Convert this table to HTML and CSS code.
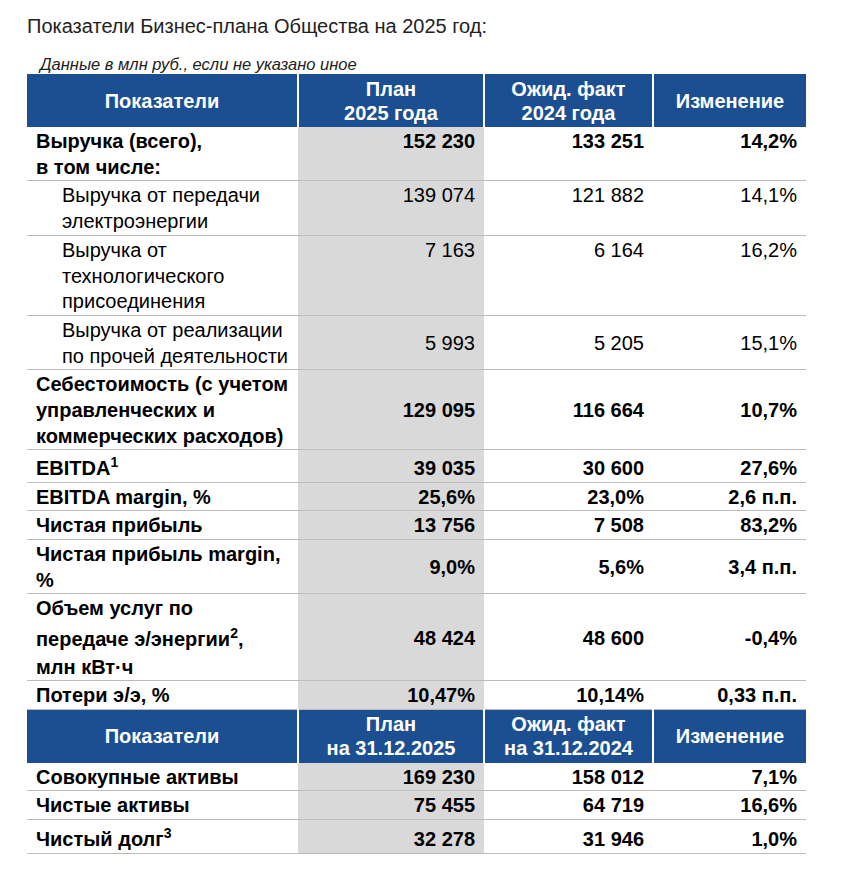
FILE: index.html
```html
<!DOCTYPE html>
<html lang="ru">
<head>
<meta charset="utf-8">
<link rel="stylesheet" href="styles.css">
</head>
<body>
<div class="page">
  <h1 class="title">Показатели Бизнес-плана Общества на 2025 год:</h1>
  <p class="note">Данные в млн руб., если не указано иное</p>
  <table class="kpi">
    <colgroup>
      <col class="c1"><col class="c2"><col class="c3"><col class="c4">
    </colgroup>
    <thead>
      <tr class="head">
        <th>Показатели</th>
        <th>План<br>2025 года</th>
        <th>Ожид. факт<br>2024 года</th>
        <th>Изменение</th>
      </tr>
    </thead>
    <tbody>
      <tr class="b top">
        <td>Выручка (всего),<br>в том числе:</td>
        <td class="plan">152 230</td><td>133 251</td><td>14,2%</td>
      </tr>
      <tr class="top">
        <td class="ind">Выручка от передачи<br>электроэнергии</td>
        <td class="plan">139 074</td><td>121 882</td><td>14,1%</td>
      </tr>
      <tr class="top">
        <td class="ind">Выручка от<br>технологического<br>присоединения</td>
        <td class="plan">7 163</td><td>6 164</td><td>16,2%</td>
      </tr>
      <tr>
        <td class="ind">Выручка от реализации<br>по прочей деятельности</td>
        <td class="plan">5 993</td><td>5 205</td><td>15,1%</td>
      </tr>
      <tr class="b">
        <td>Себестоимость (с учетом<br>управленческих и<br>коммерческих расходов)</td>
        <td class="plan">129 095</td><td>116 664</td><td>10,7%</td>
      </tr>
      <tr class="b sup-s">
        <td>EBITDA<sup>1</sup></td>
        <td class="plan">39 035</td><td>30 600</td><td>27,6%</td>
      </tr>
      <tr class="b">
        <td>EBITDA margin, %</td>
        <td class="plan">25,6%</td><td>23,0%</td><td>2,6 п.п.</td>
      </tr>
      <tr class="b">
        <td>Чистая прибыль</td>
        <td class="plan">13 756</td><td>7 508</td><td>83,2%</td>
      </tr>
      <tr class="b">
        <td>Чистая прибыль margin,<br>%</td>
        <td class="plan">9,0%</td><td>5,6%</td><td>3,4 п.п.</td>
      </tr>
      <tr class="b">
        <td>Объем услуг по<br><span class="tall">передаче э/энергии<sup>2</sup>,</span><br>млн кВт·ч</td>
        <td class="plan">48 424</td><td>48 600</td><td>-0,4%</td>
      </tr>
      <tr class="b">
        <td>Потери э/э, %</td>
        <td class="plan">10,47%</td><td>10,14%</td><td>0,33 п.п.</td>
      </tr>
    </tbody>
    <tbody>
      <tr class="head">
        <th>Показатели</th>
        <th>План<br>на 31.12.2025</th>
        <th>Ожид. факт<br>на 31.12.2024</th>
        <th>Изменение</th>
      </tr>
      <tr class="b">
        <td>Совокупные активы</td>
        <td class="plan">169 230</td><td>158 012</td><td>7,1%</td>
      </tr>
      <tr class="b">
        <td>Чистые активы</td>
        <td class="plan">75 455</td><td>64 719</td><td>16,6%</td>
      </tr>
      <tr class="b sup-l">
        <td>Чистый долг<sup>3</sup></td>
        <td class="plan">32 278</td><td>31 946</td><td>1,0%</td>
      </tr>
    </tbody>
  </table>
</div>
</body>
</html>
```

FILE: styles.css
```css
html, body {
  margin: 0;
  padding: 0;
  background: #ffffff;
}

.page {
  padding: 14px 0 0 27px;
  font-family: "Liberation Sans", Arial, sans-serif;
  color: #000;
}

.title {
  margin: 0;
  font-size: 20px;
  line-height: 24px;
  font-weight: normal;
  color: #222;
}

.note {
  margin: 16px 0 0 13px;
  font-size: 16.5px;
  line-height: 20px;
  font-style: italic;
  color: #222;
}

.kpi {
  border-collapse: collapse;
  table-layout: fixed;
  width: 779px;
  font-size: 20px;
  line-height: 25.7px;
}

.c1 { width: 271px; }
.c2 { width: 186px; }
.c3 { width: 169px; }
.c4 { width: 153px; }

.head th {
  background: #1b4f91;
  color: #fff;
  font-weight: bold;
  text-align: center;
  vertical-align: middle;
  height: 53px;
  padding: 0 4px;
  line-height: 24px;
  border-left: 2px solid #fff;
  box-sizing: border-box;
}

.head th:first-child {
  border-left: none;
}

.kpi td {
  padding: 2px 9px 0;
  border-bottom: 1px solid #bcbcbc;
  vertical-align: middle;
  text-align: right;
}

.kpi td:first-child {
  text-align: left;
}

.kpi td.ind {
  padding-left: 35px;
}

.kpi tr.top td {
  vertical-align: top;
}

.kpi td.plan {
  background: #d9d9d9;
}

.kpi tr.b td {
  font-weight: bold;
}

.kpi sup {
  font-size: 14px;
  line-height: 0;
  vertical-align: 8.5px;
}

.kpi tr.sup-s td {
  padding-top: 5.4px;
}

.kpi tr.sup-l td {
  padding-top: 7.4px;
}

.kpi .tall {
  display: inline-block;
  padding: 5px 0 2px;
  line-height: 25.7px;
}
```
